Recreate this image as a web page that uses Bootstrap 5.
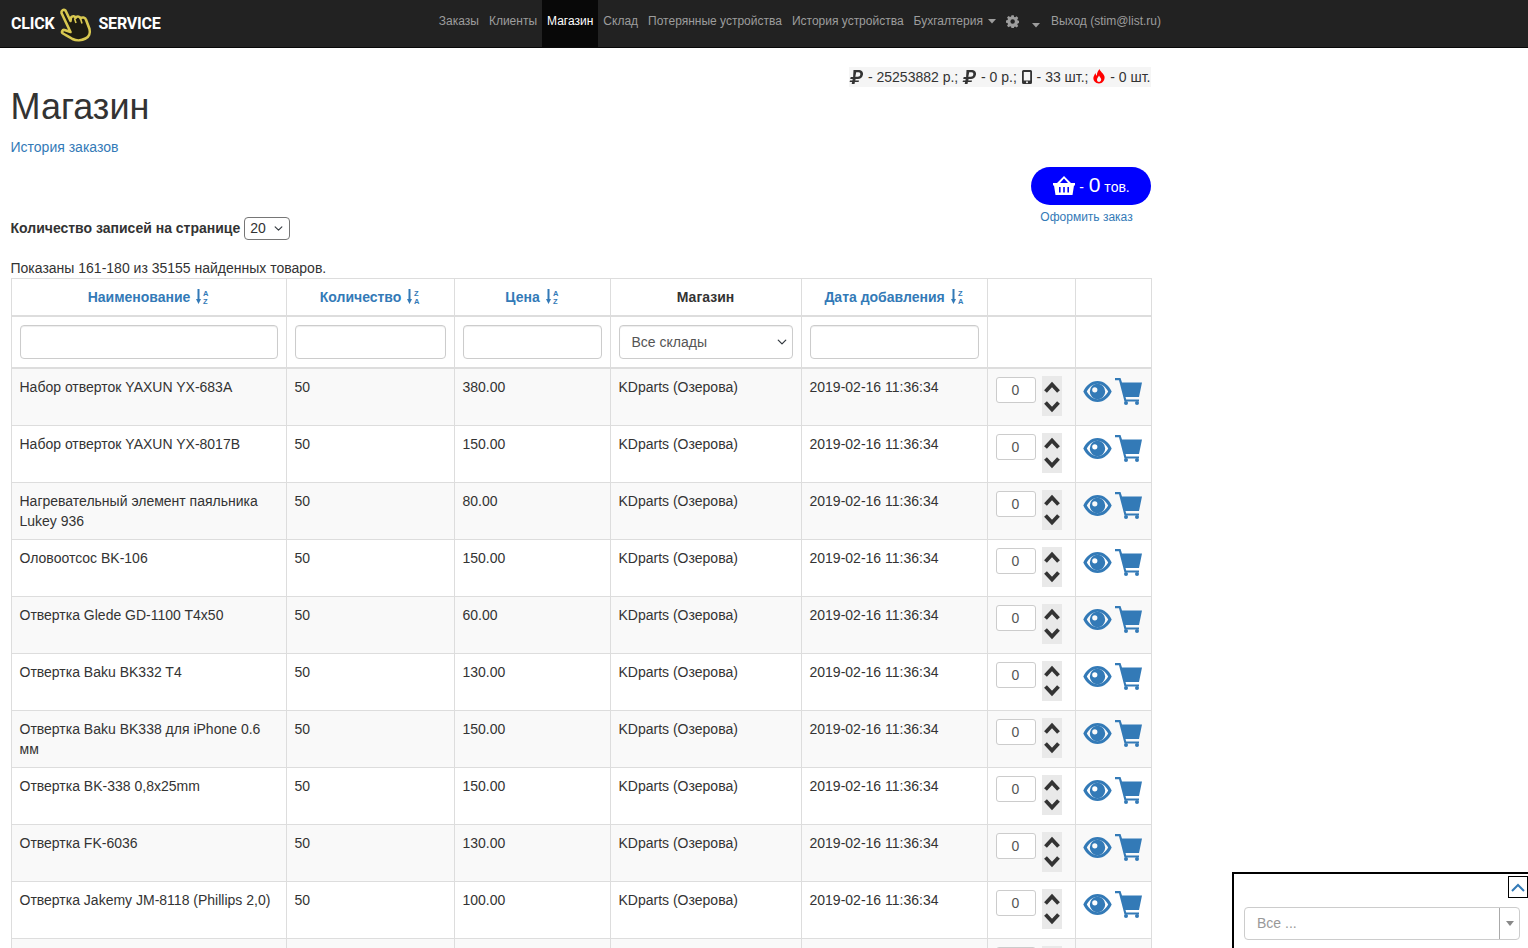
<!DOCTYPE html>
<html lang="ru">
<head>
<meta charset="utf-8">
<title>Магазин</title>
<link href="https://cdn.jsdelivr.net/npm/bootstrap@5.3.0/dist/css/bootstrap.min.css" rel="stylesheet">
<style>
html,body{overflow:hidden;height:948px}
body{font-family:"Liberation Sans",Arial,sans-serif;font-size:14px;line-height:20px;color:#333;background:#fff}
a{color:#337ab7;text-decoration:none}
.topbar{height:48px;background:#222;border-bottom:1px solid #080808;padding:0 362px 0 11px}
.brand-txt{font-family:Roboto,sans-serif;font-weight:700;font-size:16px;color:#fff;letter-spacing:-.2px}
.brand-hand{width:36px;height:36px;margin:0 4px 0 4px}
.topnav{height:47px;font-size:12px}
.topnav a{color:#9d9d9d;padding:0 5px;height:47px;display:flex;align-items:center;padding-bottom:5px}
.topnav a.on{background:#080808;color:#fff}
.caret-gap{margin-left:5px}
.caret-low{margin-left:3px;margin-right:1px}
.wrap-page{width:1140px;margin-left:10.5px}
.stat-line{background:#f5f5f5;height:20px;line-height:20px;white-space:nowrap;margin-top:19px}
.stat-line svg{vertical-align:-2px}
.page-title{font-size:36px;line-height:40px;font-weight:400;margin:0;margin-top:0;color:#333}
.history-link{margin-top:10px;margin-bottom:0;display:block}
.cart-row{margin-top:10px}
.pill-cart{width:120px;height:38px;border-radius:19px;background:#00f;color:#fff;font-size:12px;padding-left:2px}
.pill-cart b{font-weight:400;font-size:21px;margin:0 0 0 1px}
.pill-cart span{font-size:14px}
.order-link{font-size:12px;width:120px;text-align:center;line-height:16px;margin-top:4px;padding-right:8px}
.per-page{margin-top:-8px;height:23px}
.per-page strong{margin-top:-2px}
.per-select{width:46px;height:23px;padding:0 0 0 5px;font-size:14px;line-height:21px;border-color:#767676;border-radius:4px;background-position:right 5px center;background-size:11px 9px;color:#333;margin-left:4px}
.found{margin-top:18px;height:20px}
.shop-table{width:1140px;table-layout:fixed;border-collapse:collapse;margin:0;color:#333;background:#fff}
.shop-table th,.shop-table td{border:1px solid #ddd;padding:8px;line-height:20px;vertical-align:top;font-size:14px;background:none;box-shadow:none;color:#333}
.shop-table thead th{height:37px;border-bottom-width:2px;text-align:center;vertical-align:middle;padding:8px;font-weight:700}
.shop-table thead th a{color:#337ab7}
.shop-table thead th svg{vertical-align:-2px;margin-left:2px}
.shop-table .filter-row td{height:52px;border-bottom-width:2px;padding:8px}
.shop-table tbody tr.item-row{height:57px}
.shop-table tbody tr.item-row:nth-child(even) td{background:#f9f9f9}
.shop-table tbody tr.item-row:nth-child(odd) td{background:#fff}
.filter-input{height:34px;border:1px solid #ccc;border-radius:4px;width:100%;padding:6px 12px;display:block;background-color:#fff;font-size:14px;line-height:20px;color:#555;box-shadow:inset 0 1px 1px rgba(0,0,0,.075)}
.filter-select{background-position:right 4px center;background-size:12px 10px;padding-right:20px}
.qty-box{width:40px;height:26px;border:1px solid #ccc;border-radius:3px;padding:0;text-align:center;color:#555;font-size:14px;line-height:24px;background:#fff}
.step-col{width:20px;margin-left:6px;margin-top:-1px}
.step-btn{width:20px;height:20px;background:#e9e9e9;display:flex;align-items:center;justify-content:center;padding-top:1px}
.qty-cell{padding-left:8px!important}
.act-cell{padding:9px 0 0 7px!important}
.act-wrap{gap:3px}
.eye-ic{margin-top:2px}
.dock{position:fixed;left:1232px;top:872px;width:296px;height:76px;border:2px solid #000;border-right:0;border-bottom:0;background:#fff}
.dock-btn{position:absolute;right:0;top:2px;width:20px;height:22px;border:1px solid #000;background:#fff;display:flex;align-items:center;justify-content:center}
.dock-sel{position:absolute;left:10px;top:33px;width:276px;height:33px;border:1px solid #ccc;border-radius:4px;color:#999;padding:5px 12px;line-height:20px;font-size:14px}
.dock-arrow{position:absolute;right:0;top:0;bottom:0;width:20px;border-left:1px solid #aaa;display:flex;align-items:center;justify-content:center}
.dock-arrow i{display:block;width:0;height:0;border-left:4px solid transparent;border-right:4px solid transparent;border-top:5px solid #888}
.sort-letter{font-family:"Liberation Sans Narrow","Liberation Sans",sans-serif;font-size:7.5px;font-weight:700;fill:#337ab7}
</style>
</head>
<body>
<svg width="0" height="0" class="position-absolute">
<defs>
<symbol id="ic-eye" viewBox="0 0 29 23"><path fill="#337ab7" fill-rule="evenodd" d="M14.500 1C8 1 2.700 6 .3 11.500 2.700 17 8 22 14.500 22S26.300 17 28.700 11.500C26.300 6 21 1 14.500 1ZM14.500 3.800c4 0 8 2.800 10.700 7.700-2.700 4.900-6.700 7.700-10.700 7.700s-8-2.800-10.700-7.700C6.500 6.600 10.500 3.800 14.500 3.800Z"/><path fill="#337ab7" fill-rule="evenodd" d="M14.500 3.800a7.700 7.700 0 1 0 0 15.400 7.700 7.700 0 0 0 0-15.400ZM11.800 7.200a2.600 2.600 0 1 1 0 5.200 2.600 2.600 0 0 1 0-5.200Z"/></symbol>
<symbol id="ic-cart" viewBox="0 0 27 27"><path fill="#337ab7" d="M0 0h5.500l1.500 4.500H27l-3 14.500H10.500l.7 2.500H24v2H9.500L4 2.200H0Z"/><circle cx="11" cy="25" r="2" fill="#337ab7"/><circle cx="22" cy="25" r="2" fill="#337ab7"/></symbol>
<symbol id="ic-up" viewBox="0 0 16 12"><path fill="none" stroke="#333" stroke-width="3.800" d="M1.500 10.500 8 3.500l6.500 7"/></symbol>
<symbol id="ic-down" viewBox="0 0 16 12"><path fill="none" stroke="#333" stroke-width="3.800" d="M1.500 1.500 8 8.500l6.500-7"/></symbol>
<symbol id="ic-rub" viewBox="0 0 15 14"><path fill="#333" fill-rule="evenodd" d="M4.500 0h6a3.800 3.800 0 0 1 3.500 4.500C13.600 7.500 11 9 9 9H6.600l-.3 1.500H10L9.600 12H5.900l-.4 2H2.700l.4-2H.6l.4-1.500h2.400L3.700 9H1.200l.5-2h2.400ZM7.200 2.300 6.300 6.800h2.500c1.400 0 2.300-1 2.500-2.300.2-1.300-.5-2.200-1.800-2.200Z"/></symbol>
<symbol id="ic-sort" viewBox="0 0 5 15"><path fill="#337ab7" d="M1.500 0h2v10H5l-2.500 5L0 10h1.500Z"/></symbol>
</defs>
</svg>

<header class="topbar d-flex align-items-center">
  <div class="d-flex align-items-center flex-grow-1">
    <span class="brand-txt">CLICK</span>
    <svg class="brand-hand" viewBox="0 0 36 36"><path fill="#1d1b12" stroke="#d8c851" stroke-width="2.600" stroke-linejoin="round" d="M3.500 7C3 4.500 5.500 3 7.500 4.500L12.500 15 13 11.500c1.500-2 4-1.500 4.500.5 .8-2 4.200-2 5 .3 1.500-1.500 5-1 5.500 1.500L31.500 23c1 4-.5 8-4 9.500-3.500 2-9 2.500-13 .5-3-2-7-4-9.500-5.500-2-1.200-.5-4 1.500-3.500l6 2Z"/><path fill="none" stroke="#d8c851" stroke-width="1.600" d="M16.500 12.500 18 17M22.500 12.500 24 17.500"/></svg>
    <span class="brand-txt">SERVICE</span>
  </div>
  <nav class="topnav d-flex align-items-center">
    <a href="#">Заказы</a><a href="#">Клиенты</a><a href="#" class="on">Магазин</a><a href="#">Склад</a><a href="#">Потерянные устройства</a><a href="#">История устройства</a>
    <a href="#">Бухгалтерия<svg class="caret-gap" width="8" height="5" viewBox="0 0 8 5"><path fill="#9d9d9d" d="M0 0h8L4 4.500Z"/></svg></a>
    <a href="#"><svg width="13" height="13" viewBox="0 0 16 16"><path fill="#9d9d9d" fill-rule="evenodd" d="M6.500 0h3l.5 2.300 1.400.6 2-1.300 2.100 2.100-1.300 2 .6 1.400 2.200.4v3l-2.200.5-.6 1.400 1.300 2-2.100 2.100-2-1.300-1.400.6-.5 2.200h-3L6 15.400l-1.400-.6-2 1.300L.5 14l1.300-2-.6-1.400L-1 10V7l2.200-.4.600-1.400-1.300-2L2.600 1.100l2 1.300L6 1.800ZM8 5.500a3 3 0 1 0 0 6 3 3 0 0 0 0-6Z" transform="translate(.8 .2) scale(.92)"/></svg></a>
    <a href="#"><svg class="mt-2 caret-low" width="8" height="5" viewBox="0 0 8 5"><path fill="#9d9d9d" d="M0 0h8L4 4.500Z"/></svg></a>
    <a href="#">Выход (stim@list.ru)</a>
  </nav>
</header>

<main class="wrap-page">
  <div class="d-flex justify-content-end">
    <div class="stat-line">
      <svg width="15" height="14"><use href="#ic-rub"/></svg> - 25253882 р.;
      <svg width="15" height="14"><use href="#ic-rub"/></svg> - 0 р.;
      <svg width="12" height="14" viewBox="0 0 12 14"><path fill="#333" fill-rule="evenodd" d="M2.500 0h7A1.500 1.500 0 0 1 11 1.500v11A1.500 1.500 0 0 1 9.500 14h-7A1.500 1.500 0 0 1 1 12.500v-11A1.500 1.500 0 0 1 2.500 0ZM2.800 2v8.500h6.400V2ZM6 11.200a1 1 0 1 0 0 2 1 1 0 0 0 0-2Z"/></svg> - 33 шт.;
      <svg width="14" height="15" viewBox="0 0 14 15"><path fill="#f00" fill-rule="evenodd" d="M7.500 0c.5 2.500 4 4 5 7.500.7 3.500-2 7-5.500 7S.7 11.500 1.500 8C2 6.500 3 5 3.500 4c.2 1.500.7 2.200 1.400 2.700C4.800 4 6 2 7.500 0ZM7 6.500C6.500 8 5 9 5 10.800c0 1.400 1 2.200 2 2.200s2.200-.9 2.200-2.400C9.200 9 7.500 8 7 6.500Z"/></svg> - 0 шт.
    </div>
  </div>
  <h1 class="page-title">Магазин</h1>
  <a class="history-link" href="#">История заказов</a>
  <div class="d-flex justify-content-end cart-row">
    <div>
      <div class="pill-cart d-flex align-items-center justify-content-center">
        <svg class="me-1" width="22" height="20" viewBox="0 0 22 20"><path fill="#fff" fill-rule="evenodd" d="M11 0 18 7H22V9.500H21L19.500 19H2.500L1 9.500H0V7H4ZM11 2.500 7 7h8ZM6 11v5.500h1.600V11ZM10.200 11v5.500h1.600V11ZM14.400 11v5.500H16V11Z"/></svg>
        <span>- <b>0</b> тов.</span>
      </div>
      <a class="order-link d-block" href="#">Оформить заказ</a>
    </div>
  </div>
  <div class="per-page d-flex align-items-center">
    <strong>Количество записей на странице</strong>
    <select class="form-select per-select"><option>20</option></select>
  </div>
  <div class="found">Показаны 161-180 из 35155 найденных товаров.</div>
  <table class="table shop-table">
    <colgroup><col style="width:275px"><col style="width:168px"><col style="width:156px"><col style="width:191px"><col style="width:186px"><col style="width:88px"><col style="width:76px"></colgroup>
    <thead>
      <tr>
        <th><a href="#">Наименование <svg width="13" height="15" viewBox="0 0 13 15"><use href="#ic-sort" width="5" height="15"/><text class="sort-letter" x="7" y="6.500">A</text><text class="sort-letter" x="7" y="14.500">Z</text></svg></a></th>
        <th><a href="#">Количество <svg width="13" height="15" viewBox="0 0 13 15"><use href="#ic-sort" width="5" height="15"/><text class="sort-letter" x="7" y="6.500">Z</text><text class="sort-letter" x="7" y="14.500">A</text></svg></a></th>
        <th><a href="#">Цена <svg width="13" height="15" viewBox="0 0 13 15"><use href="#ic-sort" width="5" height="15"/><text class="sort-letter" x="7" y="6.500">A</text><text class="sort-letter" x="7" y="14.500">Z</text></svg></a></th>
        <th>Магазин</th>
        <th><a href="#">Дата добавления <svg width="13" height="15" viewBox="0 0 13 15"><use href="#ic-sort" width="5" height="15"/><text class="sort-letter" x="7" y="6.500">Z</text><text class="sort-letter" x="7" y="14.500">A</text></svg></a></th>
        <th></th>
        <th></th>
      </tr>
    </thead>
    <tbody>
      <tr class="filter-row"><td><input class="filter-input"></td><td><input class="filter-input"></td><td><input class="filter-input"></td><td><select class="form-select filter-input filter-select"><option>Все склады</option></select></td><td><input class="filter-input"></td><td></td><td></td></tr>
      <tr class="item-row"><td>Набор отверток YAXUN YX-683A</td><td>50</td><td>380.00</td><td>KDparts (Озерова)</td><td>2019-02-16 11:36:34</td><td class="qty-cell"><div class="d-flex"><div class="qty-box">0</div><div class="step-col"><div class="step-btn"><svg width="16" height="12"><use href="#ic-up"/></svg></div><div class="step-btn"><svg width="16" height="12"><use href="#ic-down"/></svg></div></div></div></td><td class="act-cell"><div class="d-flex act-wrap"><svg class="eye-ic" width="29" height="23"><use href="#ic-eye"/></svg><svg width="27" height="27"><use href="#ic-cart"/></svg></div></td></tr>
      <tr class="item-row"><td>Набор отверток YAXUN YX-8017B</td><td>50</td><td>150.00</td><td>KDparts (Озерова)</td><td>2019-02-16 11:36:34</td><td class="qty-cell"><div class="d-flex"><div class="qty-box">0</div><div class="step-col"><div class="step-btn"><svg width="16" height="12"><use href="#ic-up"/></svg></div><div class="step-btn"><svg width="16" height="12"><use href="#ic-down"/></svg></div></div></div></td><td class="act-cell"><div class="d-flex act-wrap"><svg class="eye-ic" width="29" height="23"><use href="#ic-eye"/></svg><svg width="27" height="27"><use href="#ic-cart"/></svg></div></td></tr>
      <tr class="item-row"><td>Нагревательный элемент паяльника Lukey 936</td><td>50</td><td>80.00</td><td>KDparts (Озерова)</td><td>2019-02-16 11:36:34</td><td class="qty-cell"><div class="d-flex"><div class="qty-box">0</div><div class="step-col"><div class="step-btn"><svg width="16" height="12"><use href="#ic-up"/></svg></div><div class="step-btn"><svg width="16" height="12"><use href="#ic-down"/></svg></div></div></div></td><td class="act-cell"><div class="d-flex act-wrap"><svg class="eye-ic" width="29" height="23"><use href="#ic-eye"/></svg><svg width="27" height="27"><use href="#ic-cart"/></svg></div></td></tr>
      <tr class="item-row"><td>Оловоотсос BK-106</td><td>50</td><td>150.00</td><td>KDparts (Озерова)</td><td>2019-02-16 11:36:34</td><td class="qty-cell"><div class="d-flex"><div class="qty-box">0</div><div class="step-col"><div class="step-btn"><svg width="16" height="12"><use href="#ic-up"/></svg></div><div class="step-btn"><svg width="16" height="12"><use href="#ic-down"/></svg></div></div></div></td><td class="act-cell"><div class="d-flex act-wrap"><svg class="eye-ic" width="29" height="23"><use href="#ic-eye"/></svg><svg width="27" height="27"><use href="#ic-cart"/></svg></div></td></tr>
      <tr class="item-row"><td>Отвертка Glede GD-1100 T4x50</td><td>50</td><td>60.00</td><td>KDparts (Озерова)</td><td>2019-02-16 11:36:34</td><td class="qty-cell"><div class="d-flex"><div class="qty-box">0</div><div class="step-col"><div class="step-btn"><svg width="16" height="12"><use href="#ic-up"/></svg></div><div class="step-btn"><svg width="16" height="12"><use href="#ic-down"/></svg></div></div></div></td><td class="act-cell"><div class="d-flex act-wrap"><svg class="eye-ic" width="29" height="23"><use href="#ic-eye"/></svg><svg width="27" height="27"><use href="#ic-cart"/></svg></div></td></tr>
      <tr class="item-row"><td>Отвертка Baku BK332 T4</td><td>50</td><td>130.00</td><td>KDparts (Озерова)</td><td>2019-02-16 11:36:34</td><td class="qty-cell"><div class="d-flex"><div class="qty-box">0</div><div class="step-col"><div class="step-btn"><svg width="16" height="12"><use href="#ic-up"/></svg></div><div class="step-btn"><svg width="16" height="12"><use href="#ic-down"/></svg></div></div></div></td><td class="act-cell"><div class="d-flex act-wrap"><svg class="eye-ic" width="29" height="23"><use href="#ic-eye"/></svg><svg width="27" height="27"><use href="#ic-cart"/></svg></div></td></tr>
      <tr class="item-row"><td>Отвертка Baku BK338 для iPhone 0.6 мм</td><td>50</td><td>150.00</td><td>KDparts (Озерова)</td><td>2019-02-16 11:36:34</td><td class="qty-cell"><div class="d-flex"><div class="qty-box">0</div><div class="step-col"><div class="step-btn"><svg width="16" height="12"><use href="#ic-up"/></svg></div><div class="step-btn"><svg width="16" height="12"><use href="#ic-down"/></svg></div></div></div></td><td class="act-cell"><div class="d-flex act-wrap"><svg class="eye-ic" width="29" height="23"><use href="#ic-eye"/></svg><svg width="27" height="27"><use href="#ic-cart"/></svg></div></td></tr>
      <tr class="item-row"><td>Отвертка BK-338 0,8x25mm</td><td>50</td><td>150.00</td><td>KDparts (Озерова)</td><td>2019-02-16 11:36:34</td><td class="qty-cell"><div class="d-flex"><div class="qty-box">0</div><div class="step-col"><div class="step-btn"><svg width="16" height="12"><use href="#ic-up"/></svg></div><div class="step-btn"><svg width="16" height="12"><use href="#ic-down"/></svg></div></div></div></td><td class="act-cell"><div class="d-flex act-wrap"><svg class="eye-ic" width="29" height="23"><use href="#ic-eye"/></svg><svg width="27" height="27"><use href="#ic-cart"/></svg></div></td></tr>
      <tr class="item-row"><td>Отвертка FK-6036</td><td>50</td><td>130.00</td><td>KDparts (Озерова)</td><td>2019-02-16 11:36:34</td><td class="qty-cell"><div class="d-flex"><div class="qty-box">0</div><div class="step-col"><div class="step-btn"><svg width="16" height="12"><use href="#ic-up"/></svg></div><div class="step-btn"><svg width="16" height="12"><use href="#ic-down"/></svg></div></div></div></td><td class="act-cell"><div class="d-flex act-wrap"><svg class="eye-ic" width="29" height="23"><use href="#ic-eye"/></svg><svg width="27" height="27"><use href="#ic-cart"/></svg></div></td></tr>
      <tr class="item-row"><td>Отвертка Jakemy JM-8118 (Phillips 2,0)</td><td>50</td><td>100.00</td><td>KDparts (Озерова)</td><td>2019-02-16 11:36:34</td><td class="qty-cell"><div class="d-flex"><div class="qty-box">0</div><div class="step-col"><div class="step-btn"><svg width="16" height="12"><use href="#ic-up"/></svg></div><div class="step-btn"><svg width="16" height="12"><use href="#ic-down"/></svg></div></div></div></td><td class="act-cell"><div class="d-flex act-wrap"><svg class="eye-ic" width="29" height="23"><use href="#ic-eye"/></svg><svg width="27" height="27"><use href="#ic-cart"/></svg></div></td></tr>
      <tr class="item-row"><td></td><td></td><td></td><td></td><td></td><td class="qty-cell"><div class="d-flex"><div class="qty-box"></div><div class="step-col"><div class="step-btn"></div></div></div></td><td></td></tr>
    </tbody>
  </table>
</main>

<aside class="dock">
  <div class="dock-btn"><svg width="14" height="9" viewBox="0 0 14 9"><path fill="none" stroke="#337ab7" stroke-width="2" d="M1 8 7 2l6 6"/></svg></div>
  <div class="dock-sel">Все ...<div class="dock-arrow"><i></i></div></div>
</aside>
<script src="https://cdn.jsdelivr.net/npm/bootstrap@5.3.0/dist/js/bootstrap.bundle.min.js"></script>
</body>
</html>
